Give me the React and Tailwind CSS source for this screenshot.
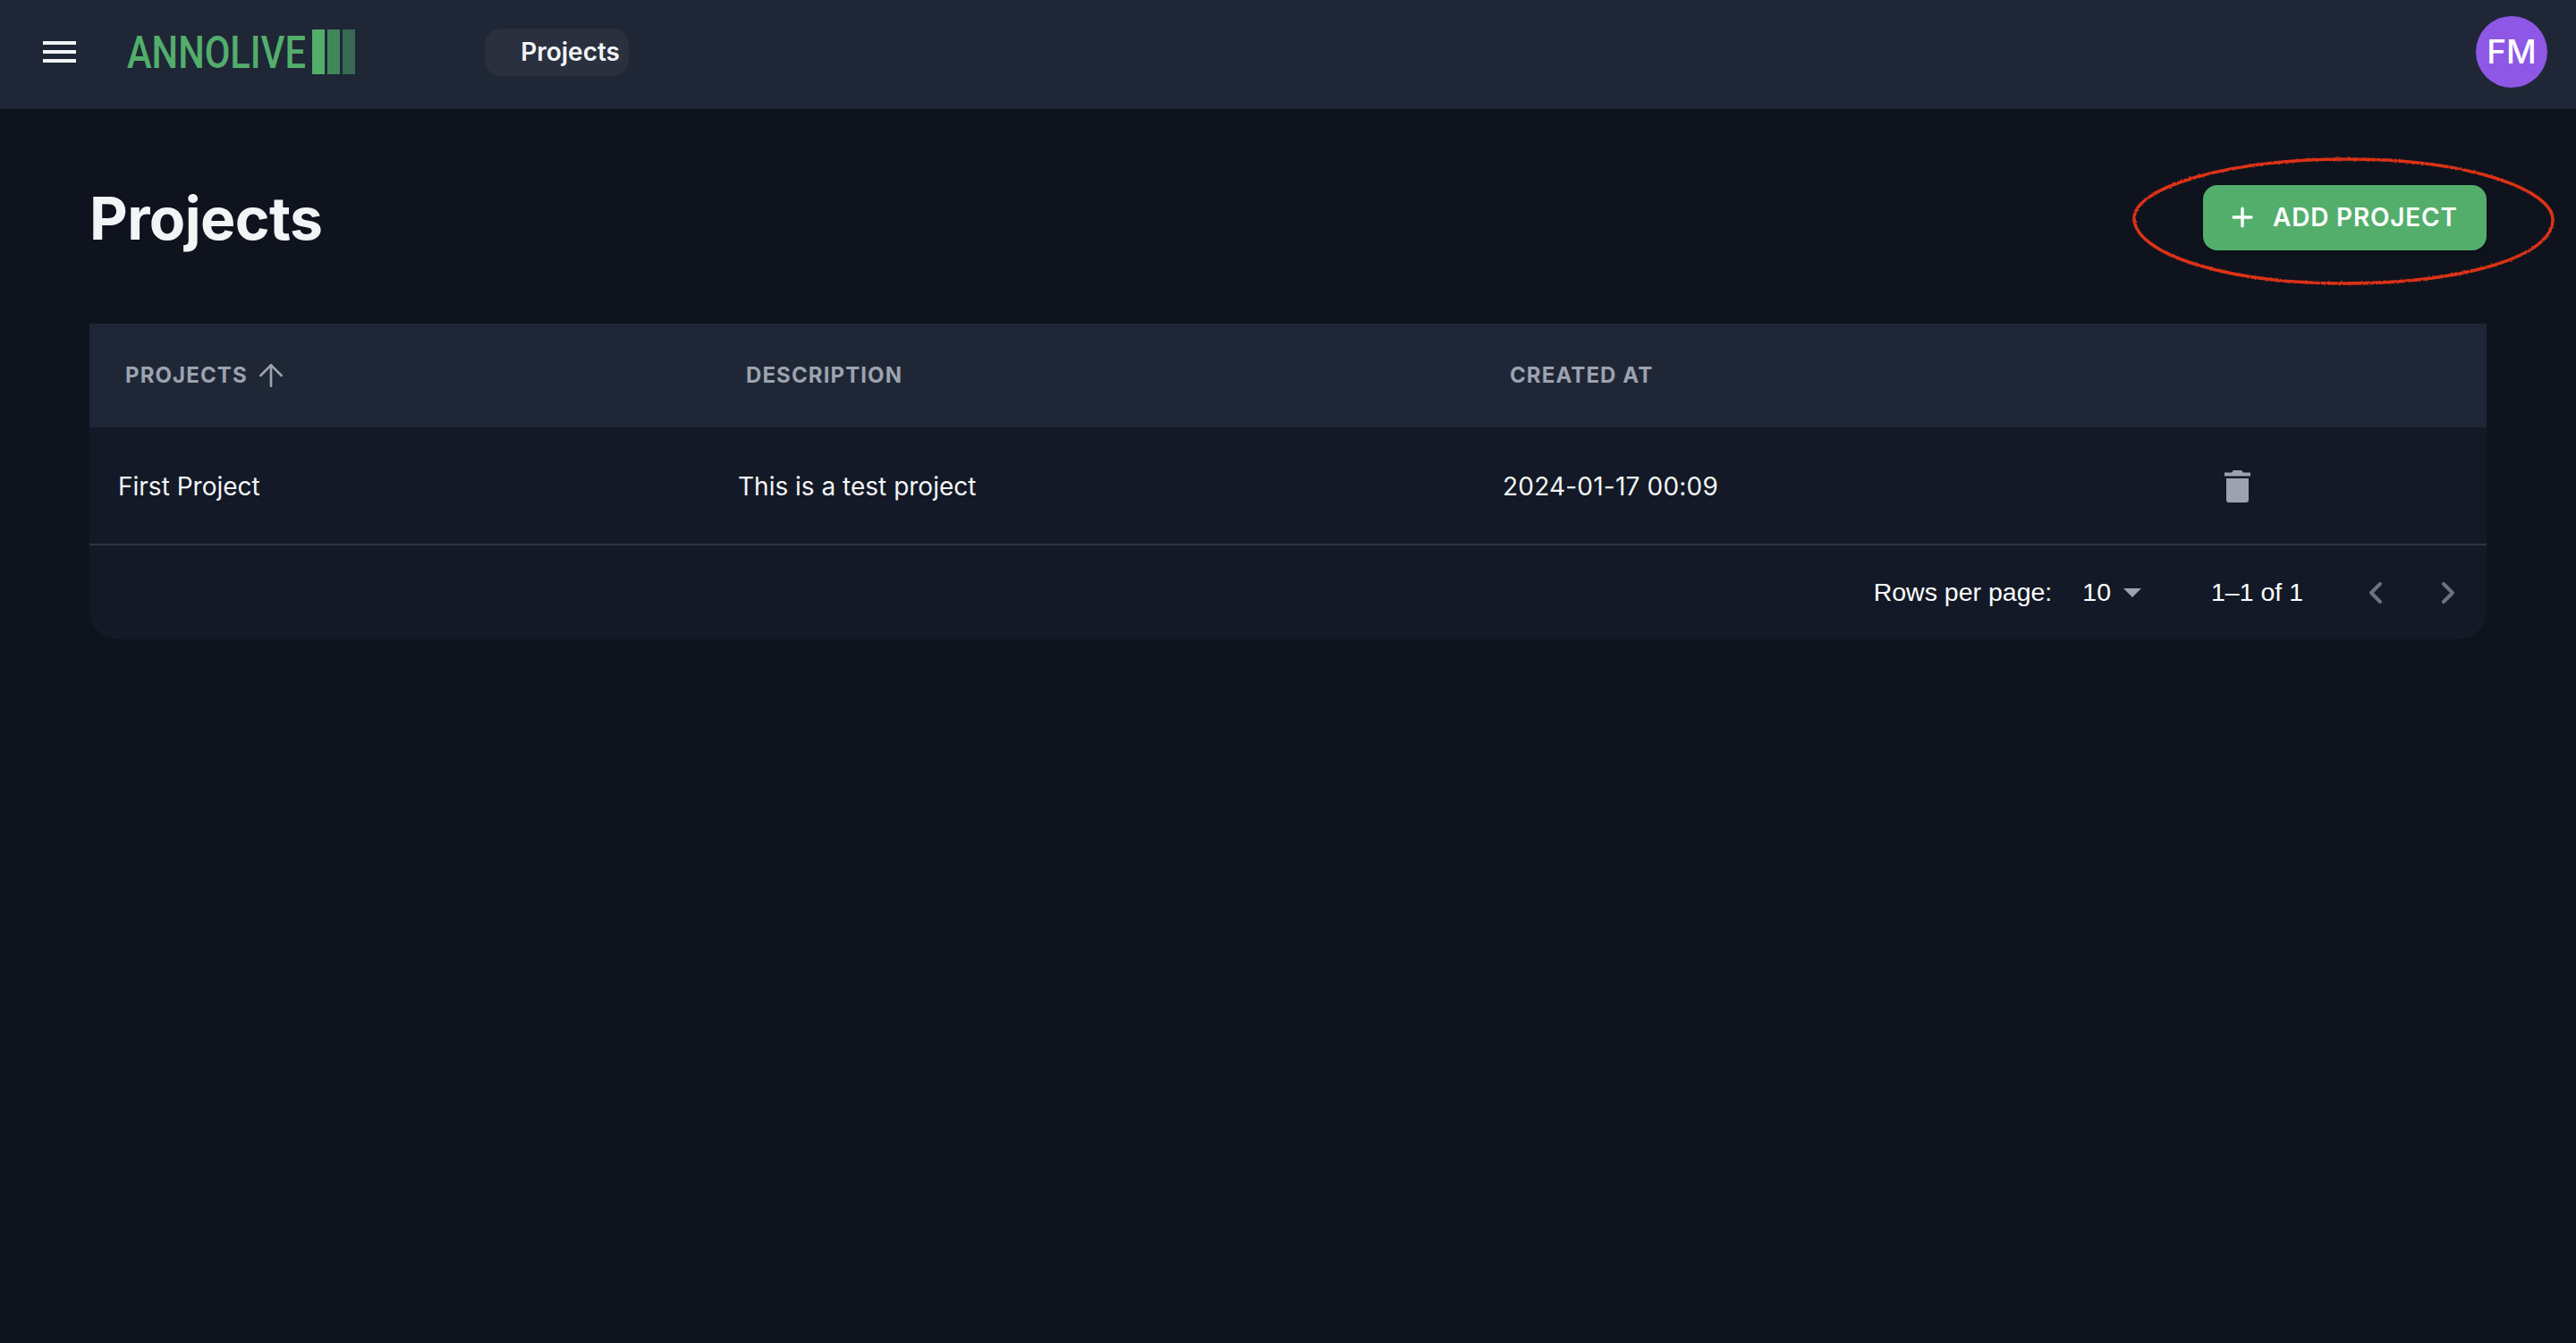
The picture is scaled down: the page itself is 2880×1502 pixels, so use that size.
import React from "react";
import { Plus, ArrowUp, ChevronLeft, ChevronRight } from "lucide-react";

const rowGrid = "grid grid-cols-[694px_854px_799px_1fr]";

function Logo() {
  return (
    <div className="flex items-center gap-[7px]">
      <svg width="200" height="50" className="block overflow-visible">
        <text
          x="0"
          y="43"
          textLength="200"
          lengthAdjust="spacingAndGlyphs"
          fontFamily="Roboto, sans-serif"
          fontSize="50"
          fontWeight="500"
          fill="#53ae6c"
        >
          ANNOLIVE
        </text>
      </svg>
      <div className="flex h-[50px] gap-[3px]">
        <div className="w-[14px] bg-[#53ae6c]" />
        <div className="w-[14px] bg-[#41875a]" />
        <div className="w-[14px] bg-[#366a52]" />
      </div>
    </div>
  );
}

function TrashIcon() {
  return (
    <svg width="29" height="36" viewBox="0 0 29 36" fill="#9ca3af" className="block">
      <path d="M10 0h9l2 2.5h8V6.500H0V2.500h8z" />
      <path d="M2 9h25v24a3 3 0 0 1-3 3H5a3 3 0 0 1-3-3z" />
    </svg>
  );
}

function HeaderCell({ children, className = "" }) {
  return (
    <div className={`flex items-center pl-10 text-[24px] font-bold tracking-[1.1px] text-[#9ca3af] ${className}`}>
      {children}
    </div>
  );
}

export default function App() {
  return (
    <div className="relative min-h-screen bg-[#0f131e] font-['Inter',sans-serif] text-[#f3f4f6]">
      <header className="flex h-[122px] items-center bg-[#1f2737] pb-[6px] pr-[32px]">
        <div className="ml-[48px] flex h-[24px] w-[37px] flex-col justify-between">
          <div className="h-[4px] bg-[#f3f4f6]" />
          <div className="h-[4px] bg-[#f3f4f6]" />
          <div className="h-[4px] bg-[#f3f4f6]" />
        </div>
        <div className="ml-[57px]">
          <Logo />
        </div>
        <div className="ml-[145px] flex h-[53px] w-[161px] items-center justify-end rounded-[18px] bg-[#2a303e] pr-[10px] text-[28px] font-semibold">
          Projects
        </div>
        <div className="ml-auto flex h-[80px] w-[80px] items-center justify-center rounded-full bg-[#8e57e5] text-[37px] font-medium text-white">
          FM
        </div>
      </header>

      <main className="px-[100px]">
        <div className="flex h-[240px] items-center justify-between">
          <h1 className="mt-[4px] text-[66px] font-bold tracking-[-0.6px]">Projects</h1>
          <button className="mt-[2px] flex h-[73px] w-[317px] items-center gap-[17px] rounded-[16px] bg-[#53ae6c] pl-[27px] text-[28px] font-semibold tracking-[0.8px] text-white shadow-md">
            <Plus size={34} strokeWidth={2.4} />
            ADD PROJECT
          </button>
        </div>

        <div className="overflow-hidden rounded-b-[32px] bg-[#131926]">
          <div className={`${rowGrid} h-[116px] bg-[#1f2737]`}>
            <HeaderCell>
              PROJECTS
              <ArrowUp size={40} strokeWidth={1.6} className="ml-[6px]" />
            </HeaderCell>
            <HeaderCell>DESCRIPTION</HeaderCell>
            <HeaderCell>CREATED AT</HeaderCell>
            <div />
          </div>

          <div className={`${rowGrid} h-[132px] items-center border-b-2 border-[#2d3340] pt-[2px] text-[28px]`}>
            <div className="pl-[32px]">First Project</div>
            <div className="pl-[31px]">This is a test project</div>
            <div className="pl-[32px] tracking-[0.2px]">2024-01-17 00:09</div>
            <div className="pl-[40px]">
              <TrashIcon />
            </div>
          </div>

          <div className="flex h-[105px] items-center justify-end font-['Liberation_Sans',sans-serif] text-[28.5px] text-white">
            <span>Rows per page:</span>
            <span className="ml-[34px]">10</span>
            <svg width="20" height="10" viewBox="0 0 20 10" fill="#9ca3af" className="ml-[14px]">
              <path d="M0 0h20L10 10z" />
            </svg>
            <span className="ml-[78px]">1–1 of 1</span>
            <ChevronLeft size={40} strokeWidth={2.4} color="#6b7280" className="ml-[61px]" />
            <ChevronRight size={40} strokeWidth={2.4} color="#6b7280" className="ml-[41px] mr-[23px]" />
          </div>
        </div>
      </main>

      {/* hand drawn mark round the button */}
      <svg className="absolute left-[2380px] top-[172px]" width="480" height="150" viewBox="0 0 480 150" fill="none">
        <defs>
          <filter id="rough" x="-5%" y="-10%" width="110%" height="120%">
            <feTurbulence type="fractalNoise" baseFrequency="0.4" numOctaves="2" seed="3" />
            <feDisplacementMap in="SourceGraphic" scale="2.5" />
          </filter>
        </defs>
        <path
          d="M6 72C6 38 110 6 245 6C380 6 474 40 474 74C474 116 370 145 240 145C110 145 6 112 6 72Z"
          stroke="#dc3318"
          strokeWidth="3.5"
          filter="url(#rough)"
        />
      </svg>
    </div>
  );
}
